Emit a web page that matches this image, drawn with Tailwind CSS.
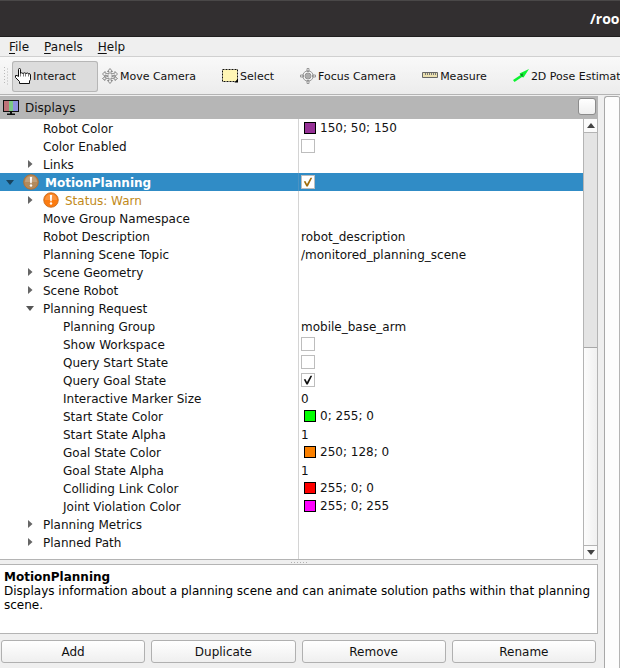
<!DOCTYPE html>
<html lang="en">
<head>
<meta charset="utf-8">
<title>RViz</title>
<script src="https://cdn.jsdelivr.net/npm/@tailwindcss/browser@4"></script>
</head>
<body class="flex h-screen flex-col overflow-hidden bg-[#efefef] font-['DejaVu_Sans',sans-serif] text-[12px] leading-[18px] text-[#111]">
<svg class="hidden" aria-hidden="true">
  <symbol id="right" viewBox="0 0 5 8"><path d="M0 0L4.500 4L0 8z" fill="#666"/></symbol>
  <symbol id="down" viewBox="0 0 8 5"><path d="M0 0H8L4 5z" fill="currentColor"/></symbol>
  <symbol id="tick" viewBox="0 0 14 14"><path d="M2.800 6.500L4.400 6L6 9L9.500 2.800H11.200L6.800 11.500H5.400Z" fill="currentColor"/></symbol>
  <symbol id="warn" viewBox="0 0 16 16">
    <circle cx="8" cy="8" r="7.3" fill="currentColor" stroke="#c46a1c" stroke-width=".8"/>
    <path d="M2 8a6 6 0 0 1 12 0z" fill="#fff" opacity=".18"/>
    <path d="M6.900 3h2.200L8.700 9.200H7.300z" fill="#fff"/><circle cx="8" cy="11.500" r="1.200" fill="#fff"/>
  </symbol>
</svg>

<header class="flex h-[37px] shrink-0 items-center justify-end overflow-hidden border-t border-b border-t-[#4a4848] border-b-[#1f1e1e] bg-[#322f30]">
  <h1 class="w-[30px] whitespace-nowrap font-['Open_Sans',sans-serif] text-[14px] font-bold text-white">/roo</h1>
</header>

<nav class="flex h-5 shrink-0 items-center gap-[15px] border-b border-[#d0d0d0] px-[9px] [&_u]:underline-offset-2">
  <button><u>F</u>ile</button>
  <button><u>P</u>anels</button>
  <button><u>H</u>elp</button>
</nav>

<div role="toolbar" class="flex h-[38px] shrink-0 items-center overflow-hidden border-b border-[#b4b4b4] bg-linear-to-b from-[#f9f9f9] to-[#ececec] pt-px text-[11px]">
  <svg class="mr-[4px] ml-[4px] h-[18px] w-1 shrink-0" viewBox="0 0 4 18"><path d="M.5 0V18M3.500 1.500V18" stroke="#b9b9b9" stroke-dasharray="1 2"/></svg>
  <div class="flex gap-px [&>button]:flex [&>button]:h-[31px] [&>button]:shrink-0 [&>button]:items-center [&>button]:gap-[2px] [&>button]:pt-px [&>button]:pr-[22px] [&>button]:pl-[3px] [&>button]:whitespace-nowrap [&_svg]:-mt-[2px] [&_svg]:size-4 [&_svg]:shrink-0">
    <button class="rounded-[3px] bg-[#dcdcdc] inset-ring inset-ring-[#b6b6b6]">
      <svg viewBox="0 0 16 16"><path d="M3.500 8.500V1.500Q3.500.5 4.500.5T5.500 1.500V5.500Q6.500 4 8 5.500Q9.500 4 11 5.500Q12.500 4.500 13.500 5.500Q15.500 5.500 15.500 7V11.500L14.500 13V15.500H4.500V13.500L.5 9.500V7.500H2Z" fill="#fff" stroke="#111"/><path d="M5.500 5V8.500M8.500 5.500V8.500M10.500 5.500V8.500M13.500 6V8.500" stroke="#444" stroke-width=".7"/></svg>Interact
    </button>
    <button>
      <svg viewBox="0 0 16 16"><path d="M8 .5L10.500 3.500H9V6L13 5V3.500L15.500 6L13 8.500V7L9.500 8L13 9.500V8.500L15.500 10.500L13 12.500V11L9 10V12.500H10.500L8 15.500L5.500 12.500H7V10L3 11V12.500L.5 10.500L3 8.500V9.500L6.500 8L3 7V8.500L.5 6L3 3.500V5L7 6V3.500H5.500Z" fill="#eee" stroke="#666" stroke-width=".7"/></svg>Move Camera
    </button>
    <button>
      <svg viewBox="0 0 16 16"><path d="M.5 1.500H15.500V13.500H.5Z" fill="#fff6b5" stroke="#111" stroke-dasharray="2 1"/><path d="M16 10.500V14.500H12.500z"/></svg>Select
    </button>
    <button>
      <svg viewBox="0 0 16 16" fill="none" stroke="#858585" stroke-width=".8"><circle cx="8" cy="8" r="5.2"/><circle cx="8" cy="8" r="3"/><path d="M7 .5H9V3.500H7ZM7 12.500H9V15.500H7ZM.5 7H3.500V9H.5ZM12.500 7H15.500V9H12.500ZM7 5V11M9 5V11M5 7H11M5 9H11"/></svg>Focus Camera
    </button>
    <button>
      <svg viewBox="0 0 16 16"><path d="M.5 4.500H15.500V9.500H.5Z" fill="#ebe0af" stroke="#666"/><path d="M3.500 5V7M5.500 5V7M7.500 5V7M9.500 5V7M11.500 5V7M13.500 5V7" stroke="#777"/></svg>Measure
    </button>
    <button>
      <svg viewBox="0 0 16 16"><path d="M16 1L6.500 5.500L7.500 7L0 12L1.500 14L9 9L10.500 9.500Z" fill="#0cf331"/><path d="M7 6.500L10 5.500L9.500 9Z" fill="#118529"/></svg>2D Pose Estimate
    </button>
  </div>
</div>

<main class="flex min-h-0 flex-1 pt-px">
  <section class="flex min-w-0 flex-1 flex-col" aria-label="Displays">
    <div class="flex h-[23px] shrink-0 items-center bg-[#b6b6b6] pr-[2px] pl-[3px]">
      <svg class="size-4" viewBox="0 0 16 16"><path d="M0 0H16V12H0Z" fill="#111"/><path d="M1 1H6V11H1z" fill="#bd7378"/><path d="M6 1H10V11H6z" fill="#7cc986"/><path d="M10 1H15V11H10z" fill="#8f91df"/><path d="M7 12H9V13.500H12V15H4V13.500H7z" fill="#111"/></svg>
      <h2 class="ml-[6px] flex-1">Displays</h2>
      <button aria-label="Float panel" class="mb-[2px] h-[17px] w-[18px] rounded-[3px] border border-[#8c8c8c] bg-linear-to-b from-white to-[#efefef]"></button>
    </div>

    <div class="flex min-h-0 flex-1 border-r border-b border-[#b4b4b4] bg-white">
      <div class="flex min-w-0 flex-1 flex-col overflow-hidden">
        <table class="w-full shrink-0 table-fixed border-separate border-spacing-0 whitespace-nowrap [&_input]:m-0 [&_input]:size-[14px] [&_input]:appearance-none [&_input]:border [&_input]:border-[#bdbdbd] [&_input]:bg-white [&_label]:relative [&_label]:ml-[2px] [&_label]:flex [&_label]:size-[14px] [&_td]:h-[18px] [&_td]:p-0 [&_th]:h-[18px] [&_th]:border-r [&_th]:border-[#d4d4d4] [&_th]:p-0 [&_th]:pt-[2px] [&_th]:pl-[43px] [&_th]:text-left [&_th]:leading-4 [&_th]:font-normal [&_th_svg]:-mt-[2px] [&_i]:mx-[3px] [&_i]:mr-[4px] [&_i]:size-3 [&_i]:border [&_i]:border-black [&_td>div]:flex [&_td>div]:h-[18px] [&_td>div]:items-center [&_td>div]:pl-[2px] [&_td>div]:leading-4 [&_td>span]:block [&_td>span]:pt-[2px] [&_td>span]:pl-[2px] [&_td>span]:leading-4">
          <colgroup><col class="w-[299px]"><col></colgroup>
          <tbody>
            <tr><th scope="row">Robot Color</th><td><div><i class="bg-[#963296]"></i><span>150; 50; 150</span></div></td></tr>
            <tr><th scope="row">Color Enabled</th><td><label><input type="checkbox" aria-label="Color Enabled"></label></td></tr>
            <tr><th scope="row"><div class="-ml-[15px] flex h-4 items-center"><svg class="mr-[10px] h-2 w-[5px]"><use href="#right"/></svg>Links</div></th><td></td></tr>
            <tr class="bg-[#308cc6] text-white [&>th]:border-[#4a93c4]!"><th scope="row"><div class="-ml-[37px] flex h-4 items-center font-bold"><svg class="mr-[9px] h-[5px] w-2 text-[#17435f]"><use href="#down"/></svg><svg class="mr-[6px] size-4 text-[#b28a5d]"><use href="#warn"/></svg>MotionPlanning</div></th><td><label><input type="checkbox" checked aria-label="MotionPlanning"><svg class="pointer-events-none absolute inset-0 size-[14px] text-[#a06c0c]"><use href="#tick"/></svg></label></td></tr>
            <tr><th scope="row"><div class="-ml-[15px] flex h-4 items-center text-[#c18a1a]"><svg class="mr-[10px] h-2 w-[5px]"><use href="#right"/></svg><svg class="mr-[6px] size-4 text-[#fb7b10]"><use href="#warn"/></svg>Status: Warn</div></th><td></td></tr>
            <tr><th scope="row">Move Group Namespace</th><td></td></tr>
            <tr><th scope="row">Robot Description</th><td><span>robot_description</span></td></tr>
            <tr><th scope="row">Planning Scene Topic</th><td><span>/monitored_planning_scene</span></td></tr>
            <tr><th scope="row"><div class="-ml-[15px] flex h-4 items-center"><svg class="mr-[10px] h-2 w-[5px]"><use href="#right"/></svg>Scene Geometry</div></th><td></td></tr>
            <tr><th scope="row"><div class="-ml-[15px] flex h-4 items-center"><svg class="mr-[10px] h-2 w-[5px]"><use href="#right"/></svg>Scene Robot</div></th><td></td></tr>
            <tr><th scope="row"><div class="-ml-[17px] flex h-4 items-center"><svg class="mr-[9px] h-[5px] w-2 text-[#555]"><use href="#down"/></svg>Planning Request</div></th><td></td></tr>
            <tr><th scope="row"><div class="pl-5">Planning Group</div></th><td><span>mobile_base_arm</span></td></tr>
            <tr><th scope="row"><div class="pl-5">Show Workspace</div></th><td><label><input type="checkbox" aria-label="Show Workspace"></label></td></tr>
            <tr><th scope="row"><div class="pl-5">Query Start State</div></th><td><label><input type="checkbox" aria-label="Query Start State"></label></td></tr>
            <tr><th scope="row"><div class="pl-5">Query Goal State</div></th><td><label><input type="checkbox" checked aria-label="Query Goal State"><svg class="pointer-events-none absolute inset-0 size-[14px] text-[#111]"><use href="#tick"/></svg></label></td></tr>
            <tr><th scope="row"><div class="pl-5">Interactive Marker Size</div></th><td><span>0</span></td></tr>
            <tr><th scope="row"><div class="pl-5">Start State Color</div></th><td><div><i class="bg-[#00ff00]"></i><span>0; 255; 0</span></div></td></tr>
            <tr><th scope="row"><div class="pl-5">Start State Alpha</div></th><td><span>1</span></td></tr>
            <tr><th scope="row"><div class="pl-5">Goal State Color</div></th><td><div><i class="bg-[#fa8000]"></i><span>250; 128; 0</span></div></td></tr>
            <tr><th scope="row"><div class="pl-5">Goal State Alpha</div></th><td><span>1</span></td></tr>
            <tr><th scope="row"><div class="pl-5">Colliding Link Color</div></th><td><div><i class="bg-[#ff0000]"></i><span>255; 0; 0</span></div></td></tr>
            <tr><th scope="row"><div class="pl-5">Joint Violation Color</div></th><td><div><i class="bg-[#ff00ff]"></i><span>255; 0; 255</span></div></td></tr>
            <tr><th scope="row"><div class="-ml-[15px] flex h-4 items-center"><svg class="mr-[10px] h-2 w-[5px]"><use href="#right"/></svg>Planning Metrics</div></th><td></td></tr>
            <tr><th scope="row"><div class="-ml-[15px] flex h-4 items-center"><svg class="mr-[10px] h-2 w-[5px]"><use href="#right"/></svg>Planned Path</div></th><td></td></tr>
          </tbody>
        </table>
        <div class="w-[299px] flex-1 border-r border-[#d4d4d4]"></div>
      </div>
      <div class="flex w-[14px] shrink-0 flex-col border-l border-[#b4b4b4]">
        <button aria-label="Scroll up" class="flex h-[14px] items-center justify-center border-b border-[#b4b4b4] bg-[#fbfbfb]"><svg class="h-[5px] w-2 rotate-180 text-[#444]"><use href="#down"/></svg></button>
        <div class="flex-[215] border-b border-[#a8a8a8] bg-[#e4e4e4]"></div>
        <div class="flex-[197] bg-linear-to-r from-[#fcfcfc] to-[#f0f0f0]"></div>
        <button aria-label="Scroll down" class="flex h-[14px] items-center justify-center border-t border-[#b4b4b4] bg-[#fbfbfb]"><svg class="h-[5px] w-2 text-[#444]"><use href="#down"/></svg></button>
      </div>
    </div>

    <div class="flex h-1 shrink-0 items-center justify-center" role="separator"><svg class="h-[3px] w-[17px]" viewBox="0 0 17 3"><path d="M0 1.500H17" stroke="#b0b0b0" stroke-dasharray="1 2"/></svg></div>

    <div class="h-[70px] shrink-0 border-y border-r border-[#b4b4b4] bg-white px-1 pt-[5px] leading-[14px] text-black">
      <h3 class="font-bold">MotionPlanning</h3>
      <p>Displays information about a planning scene and can animate solution paths within that planning scene.</p>
    </div>

    <div class="grid shrink-0 grid-cols-4 gap-[6px] pt-[6px] pr-[2px] pb-[5px] pl-px [&>button]:h-[23px] [&>button]:rounded-[3px] [&>button]:border [&>button]:border-[#b0b0b0] [&>button]:bg-linear-to-b [&>button]:from-white [&>button]:to-[#efefef]">
      <button>Add</button><button>Duplicate</button><button>Remove</button><button>Rename</button>
    </div>
  </section>

  <aside class="ml-[6px] flex w-4 shrink-0 rounded-t-[3px] border-t border-l border-[#a8a8a8] bg-[#fdfdfd]" aria-label="Side panel">
    <div class="flex-1 border-r border-[#b4b4b4]"></div>
  </aside>
</main>
</body>
</html>
